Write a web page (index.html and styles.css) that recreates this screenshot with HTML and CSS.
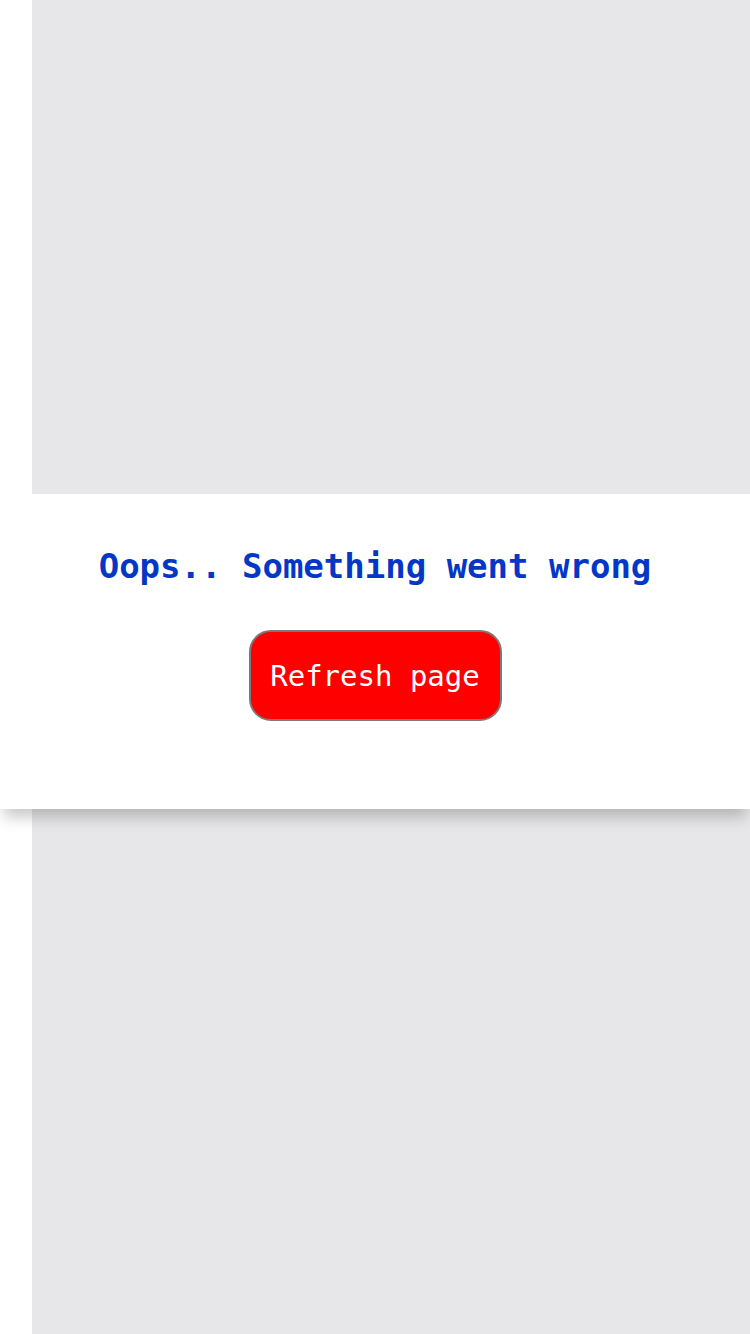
FILE: index.html
```html
<!DOCTYPE html>
<html>
<head>
<meta charset="utf-8">
<link rel="stylesheet" href="styles.css">
</head>
<body>
<div class="page">
  <div class="backdrop"></div>
</div>
<div class="error-panel">
  <h1 class="error-title">Oops.. Something went wrong</h1>
  <button class="refresh-btn">Refresh page</button>
</div>
</body>
</html>
```
FILE: styles.css
```css
html, body {
  margin: 0;
  padding: 0;
  background: #ffffff;
}
.page {
  padding-left: 32px;
  height: 1334px;
  box-sizing: border-box;
}
.backdrop {
  background: #e7e7e9;
  height: 100%;
}
.error-panel {
  position: absolute;
  left: 0;
  top: 494px;
  width: 750px;
  height: 315px;
  box-sizing: border-box;
  background: #ffffff;
  box-shadow: 0 12px 14px -4px rgba(0, 0, 0, 0.22);
  display: flex;
  flex-direction: column;
  align-items: center;
  padding-top: 52px;
}
.error-title {
  margin: 0;
  font-family: "DejaVu Sans Mono", "Liberation Mono", monospace;
  font-weight: bold;
  font-size: 34px;
  line-height: 40px;
  color: #0437c6;
}
.refresh-btn {
  margin-top: 44px;
  width: 253px;
  height: 91px;
  box-sizing: border-box;
  background: #ff0000;
  border: 2px solid #7a7a7a;
  border-radius: 22px;
  color: #ffffff;
  font-family: "DejaVu Sans Mono", "Liberation Mono", monospace;
  font-size: 29px;
  padding: 0;
}
```
